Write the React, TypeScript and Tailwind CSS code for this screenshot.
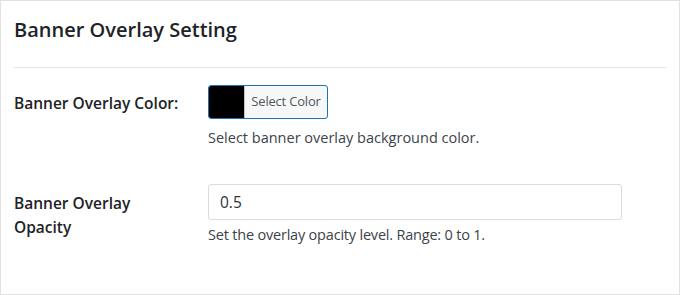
export default function App() {
  return (
    <div
      className="w-[680px] h-[295px] bg-white border border-[#e2e2e2] text-[#1d2327]"
      style={{ fontFamily: '"Open Sans", "Noto Sans", sans-serif' }}
    >
      <div className="px-[13px] pt-[15px]">
        <h2 className="text-[20px] leading-[28px] font-semibold">Banner Overlay Setting</h2>
        <hr className="mt-[23px] border-t border-[#e6e6e6]" />
      </div>

      <div className="px-[13px]">
        <div className="flex mt-[17px]">
          <div className="w-[194px] pt-[7px] text-[15.5px] leading-[22px] font-semibold">
            Banner Overlay Color:
          </div>
          <div>
            <button className="flex h-[34px] w-[120px] overflow-hidden rounded-[3px] border border-[#2271b1] bg-[#f6f7f7]">
              <span className="w-[35px] h-full bg-black" />
              <span className="flex-1 h-full flex items-center justify-center border-l border-[#c3c4c7] text-[13px] text-[#50575e] tracking-[-0.2px]">
                Select Color
              </span>
            </button>
            <p className="mt-[9px] text-[14.5px] leading-[20px] text-[#3c434a]">
              Select banner overlay background color.
            </p>
          </div>
        </div>

        <div className="flex mt-[36px]">
          <div className="w-[194px] pt-[7px]">
            <div className="max-w-[165px] text-[15.5px] leading-[24px] font-semibold">Banner Overlay Opacity</div>
          </div>
          <div>
            <input
              type="text"
              defaultValue="0.5"
              className="w-[414px] h-[36px] px-[11px] rounded-[3px] border border-[#dcdcde] text-[15.5px] text-[#2c3338] outline-none"
            />
            <p className="mt-[5px] text-[14.5px] leading-[20px] text-[#3c434a] tracking-[-0.2px]">
              Set the overlay opacity level. Range: 0 to 1.
            </p>
          </div>
        </div>
      </div>
    </div>
  );
}
